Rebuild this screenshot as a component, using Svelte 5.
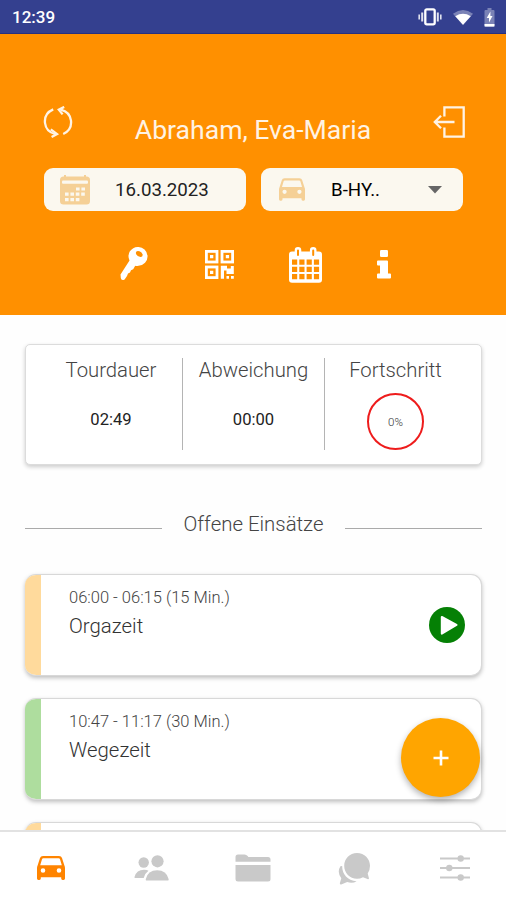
<script>
    let activeTab = $state("tour");

    const driver = "Abraham, Eva-Maria";
    const tabs = ["tour", "clients", "files", "chat", "settings"];

    const jobs = [
        { time: "06:00 - 06:15 (15 Min.)", title: "Orgazeit", kind: "orga", running: true },
        { time: "10:47 - 11:17 (30 Min.)", title: "Wegezeit", kind: "travel", running: false },
        { time: "", title: "", kind: "orga", running: false }
    ];
</script>

{#snippet car()}
    <svg class="car" viewBox="0 0 28 24">
        <path fill="currentColor" fill-rule="evenodd" d="M6 0H22Q24.4 0 25 2L27.4 9.5Q28 10.6 28 12V22.6Q28 24 26.6 24H25.6Q24.2 24 24.2 22.6V21.3H3.8V22.6Q3.8 24 2.4 24H1.4Q0 24 0 22.6V12Q0 10.6.6 9.5L3 2Q3.6 0 6 0ZM6.3 2.2Q5.3 2.2 5 3.2L3.2 9.3H24.8L23 3.2Q22.7 2.2 21.7 2.2ZM6 12.2A2.3 2.3 0 1 0 6 16.8A2.3 2.3 0 1 0 6 12.2ZM22 12.2A2.3 2.3 0 1 0 22 16.8A2.3 2.3 0 1 0 22 12.2Z" />
    </svg>
{/snippet}

<div class="screen">
    <div class="status-bar">
        <span class="clock">12:39</span>
        <div class="status-icons">
            <svg width="24" height="18" viewBox="0 0 24 18" fill="none" stroke="#fff">
                <rect x="7.3" y="1.3" width="9.4" height="15" rx="1.5" stroke-width="2.3" />
                <path d="M4.2 4.5v9M19.8 4.5v9" stroke-width="2" opacity=".85" />
                <path d="M1.2 6.5v5M22.8 6.5v5" stroke-width="1.6" opacity=".85" />
            </svg>
            <svg class="wifi" width="20" height="17" viewBox="0 0 22 17">
                <path d="M0 4.3Q11-3.6 22 4.3L11 17Z" fill="#fff" opacity=".35" />
                <path d="M2.5 7Q11 2 19.5 7L11 16.5Z" fill="#fff" />
            </svg>
            <svg width="11" height="19" viewBox="0 0 11 19">
                <path d="M1.5 2H3.5V0H7.5V2H9.5Q10.5 2 10.5 3V19H.5V3Q.5 2 1.5 2Z" fill="#fff" opacity=".35" />
                <path d="M.5 16H10.5V17.5Q10.5 18.5 9.5 18.5H1.5Q.5 18.5.5 17.5Z" fill="#fff" />
                <path d="M6.4 3.5L2.7 10H5V14.5L8.5 8H6.4Z" fill="#fff" />
            </svg>
        </div>
    </div>

    <header>
        <div class="title-row">
            <svg width="30" height="32" viewBox="0 0 30 32" fill="none" stroke="#fff3e4" stroke-width="2.3">
                <path d="M10.2 3.4C3.6 6.3 1.4 11.5 2 17C2.6 22 6 26.5 12 28" />
                <path d="M7.8 23.4L14 28L8.6 31" />
                <path d="M20.2 28C26.4 25.2 28.6 20 28 14.6C27.4 9.5 24 5.2 17.8 3.6" />
                <path d="M21.2 .9L15.8 3.6L19.6 8.4" />
            </svg>
            <h1>{driver}</h1>
            <svg width="32" height="32" viewBox="0 0 32 32" fill="none" stroke="#fff3e4" stroke-width="2.3">
                <path d="M11.4 10.5V1.3H30.7V30.7H11.4V21.5" />
                <path d="M21.5 16H2M8 9.8L1.8 16L8 22.2" />
            </svg>
        </div>

        <div class="fields">
            <div class="field">
                <svg class="date-icon" width="30" height="30" viewBox="0 0 30 30">
                    <path d="M5 0V4M25 0V4" stroke="#f5d096" stroke-width="2" />
                    <rect x="0" y="1.5" width="30" height="28" rx="3.5" fill="#f5d096" />
                    <rect x="2" y="5.5" width="26" height="3.2" rx="1" fill="#fbf8ef" />
                    <path d="M16 14h9.5M5 19.2h20.5M5 24.6h15" stroke="#fbf8ef" stroke-width="3.2" stroke-dasharray="3.6 1.8" />
                </svg>
                <span>16.03.2023</span>
            </div>
            <div class="field vehicle">
                {@render car()}
                <span>B-HY..</span>
                <svg class="caret" width="14" height="8" viewBox="0 0 14 8">
                    <path d="M0 0H14L7 7.5Z" fill="#666" />
                </svg>
            </div>
        </div>

        <div class="actions">
            <svg width="28" height="34" viewBox="0 0 28 34">
                <path fill="#fff" fill-rule="evenodd" d="M17.8 0A9.3 9.3 0 0 1 18.5 18.8Q16.5 19.3 15.2 18.8L13.2 22.2L11 23.2L10 25.6L8 26.6L7 29L4.6 32.4Q1.3 34 .8 31L.5 27.6L9.5 13.4A9.2 9.2 0 0 1 17.8 0ZM19.4 4.3Q16 3.4 15.8 6Q16.6 9.6 20.5 9.9Q23 10 22.6 7.3Q21.5 4.9 19.4 4.3Z" />
            </svg>
            <svg width="29" height="29" viewBox="0 0 29 29" fill="none" stroke="#fff">
                <g stroke-width="2.8">
                    <rect x="1.4" y="1.4" width="10.6" height="10.6" />
                    <rect x="17" y="1.4" width="10.6" height="10.6" />
                    <rect x="1.4" y="17" width="10.6" height="10.6" />
                </g>
                <path d="M5 5H8.3V8.3H5ZM20.8 5H24.1V8.3H20.8ZM5 20.8H8.3V24.1H5Z" fill="#fff" stroke="none" />
                <path d="M15.8 15.8H22V18.5H25.8V16H28.8V24H21.5V20.5H19V28.8H15.8ZM21.5 26H24V28.8H21.5ZM26 26H28.8V28.8H26Z" fill="#fff" stroke="none" />
            </svg>
            <svg class="calendar" width="33" height="36" viewBox="0 0 33 36">
                <rect x="0" y="4.5" width="33" height="31.2" rx="3" fill="#fff" />
                <path d="M9 3.4V7.5M24.2 3.4V7.5" stroke="#fff" stroke-width="6.6" stroke-linecap="round" />
                <path d="M9 3.4V8M24.2 3.4V8" stroke="#ff9000" stroke-width="2" stroke-linecap="round" />
                <path d="M3 15.2H30.2M3 22.4H30.2M3 29.6H30.2" stroke="#ff9000" stroke-width="5.2" stroke-dasharray="5.2 2.1" />
            </svg>
            <svg width="14" height="29" viewBox="0 0 14 29" fill="#fff">
                <rect x="3" y="0" width="8" height="7" rx="1.3" />
                <path d="M1 10.6H10Q11 10.6 11 11.6V23.6H13Q14 23.6 14 24.6V27.6Q14 28.6 13 28.6H1Q0 28.6 0 27.6V24.6Q0 23.6 1 23.6H3V15.6H1Q0 15.6 0 14.6V11.6Q0 10.6 1 10.6Z" />
            </svg>
        </div>
    </header>

    <main>
        <section class="summary">
            <div class="stat">
                <span class="label">Tourdauer</span>
                <span class="value">02:49</span>
            </div>
            <div class="stat">
                <span class="label">Abweichung</span>
                <span class="value">00:00</span>
            </div>
            <div class="stat">
                <span class="label">Fortschritt</span>
                <div class="progress">0%</div>
            </div>
        </section>

        <div class="divider"><span>Offene Einsätze</span></div>

        <div class="jobs">
            {#each jobs as job}
                <article class="job {job.kind}">
                    <div class="job-text">
                        <span class="time">{job.time}</span>
                        <span class="name">{job.title}</span>
                    </div>
                    {#if job.running}
                        <svg class="play" width="36" height="36" viewBox="0 0 36 36">
                            <circle cx="18" cy="18" r="18" fill="#058005" />
                            <path d="M12.8 10L27.5 18L12.8 26.6Z" fill="#fff" stroke="#fff" stroke-width="2" stroke-linejoin="round" />
                        </svg>
                    {/if}
                </article>
            {/each}
        </div>
    </main>

    <button class="fab" aria-label="Neu">
        <svg width="16" height="16" viewBox="0 0 16 16" stroke="#fff" stroke-width="2.6">
            <path d="M8 .5V15.5M.5 8H15.5" />
        </svg>
    </button>

    <nav>
        {#each tabs as tab}
            <button class:active={activeTab === tab} aria-label={tab} onclick={() => (activeTab = tab)}>
                {#if tab === "tour"}
                    {@render car()}
                {:else if tab === "clients"}
                    <svg width="36" height="26" viewBox="0 0 36 26" fill="currentColor">
                        <circle cx="9.7" cy="7.5" r="5.2" />
                        <circle cx="23.5" cy="6.3" r="6.1" />
                        <path d="M1 23Q.3 23 .5 22Q2.5 14.8 10 14.8Q13 14.8 14.5 15.8Q10.7 18.5 9.7 23Z" />
                        <path d="M12.2 25.4Q11.5 25.4 11.8 24Q13.8 15.2 23.2 15.2Q32.4 15.2 34.6 24Q34.9 25.4 34.2 25.4Z" />
                    </svg>
                {:else if tab === "files"}
                    <svg width="36" height="28" viewBox="0 0 36 28" fill="currentColor">
                        <path d="M.5 7.7V3Q.5.5 3 .5H9.5Q11.5.5 12.6 2L13.4 3H33Q35.5 3 35.5 5.5V7.7Z" />
                        <path d="M.5 11H35.5V25Q35.5 27.5 33 27.5H3Q.5 27.5.5 25Z" />
                    </svg>
                {:else if tab === "chat"}
                    <svg width="33" height="33" viewBox="0 0 33 33" fill="currentColor">
                        <path d="M19 1C26.5 1 32 6.7 32 13.8Q32 18.3 29.7 21.6L31 26.6Q30.5 27.6 29.5 27L25 25.3Q22 26.8 19 26.8C11.7 26.8 6.2 21 6.2 13.8C6.2 6.7 11.7 1 19 1Z" />
                        <path d="M4.2 14C4 21.8 9.4 28.5 18.6 29.2Q14.5 31.8 9.2 30.1L3.2 32.4Q1.6 32.6 1.9 31L3.3 26.3Q-1.3 20.2 2.4 14.2Z" />
                    </svg>
                {:else}
                    <svg width="30" height="26" viewBox="0 0 30 26" fill="currentColor" stroke="currentColor" stroke-width="1.8">
                        <path d="M0 3.5H30M0 13H30M0 22.5H30" />
                        <circle cx="20.7" cy="3.5" r="2.3" />
                        <circle cx="9.3" cy="13" r="2.3" />
                        <circle cx="20.7" cy="22.5" r="2.3" />
                    </svg>
                {/if}
            </button>
        {/each}
    </nav>
</div>

<style>
    :global(body) {
        background: #fff;
    }

    .screen {
        position: relative;
        display: flex;
        flex-direction: column;
        width: 506px;
        height: 900px;
        overflow: hidden;
        background: #fefefe;
        font-family: Roboto, "Liberation Sans", sans-serif;
        color: #222;
    }

    svg {
        display: block;
        flex: none;
    }

    .status-bar {
        display: flex;
        justify-content: space-between;
        align-items: center;
        height: 34px;
        flex: none;
        box-sizing: border-box;
        padding: 1px 11px 0 12px;
        background: #34408f;
        border-bottom: 1px solid #27307f;
        color: #fff;
    }

    .clock {
        font-size: 17px;
        font-weight: 500;
    }

    .status-icons {
        display: flex;
        align-items: center;
        gap: 11px;
    }

    header {
        height: 281px;
        flex: none;
        box-sizing: border-box;
        padding: 72px 43px 0 44px;
        background: #ff9000;
    }

    .title-row {
        display: flex;
        justify-content: space-between;
        height: 62px;
        margin-left: -1px;
        margin-right: -2px;
    }

    h1 {
        margin: 9px 0 0;
        font-size: 26.6px;
        line-height: 30px;
        font-weight: 400;
        color: #fff3e4;
        white-space: nowrap;
    }

    .fields {
        display: grid;
        grid-template-columns: 1fr 1fr;
        gap: 15px;
    }

    .field {
        display: flex;
        align-items: center;
        height: 43px;
        box-sizing: border-box;
        padding: 0 16px;
        border-radius: 9px;
        background: #fbf8ef;
        font-size: 18.7px;
    }

    .field span {
        margin-left: 25px;
        padding-top: 1px;
    }

    .vehicle {
        padding: 0 21px 0 18px;
    }

    .vehicle .car {
        width: 26px;
        height: 23px;
        color: #f5d096;
    }

    .vehicle span {
        margin-left: 26px;
        color: #000;
    }

    .caret {
        margin-left: auto;
    }

    .actions {
        display: flex;
        align-items: center;
        height: 36px;
        margin: 35px 0 0 76px;
    }

    .actions svg:nth-child(2) {
        margin-left: 57px;
    }

    .actions .calendar {
        margin-left: 55px;
        margin-top: 2px;
    }

    .actions svg:nth-child(4) {
        margin-left: 55px;
    }

    main {
        flex: 1;
        min-height: 0;
        padding: 29px 24px 0 25px;
        overflow: hidden;
    }

    .summary {
        display: grid;
        grid-template-columns: 142px 142px 142px;
        height: 121px;
        box-sizing: border-box;
        padding: 13px 14px;
        border: 1px solid #dcdcdc;
        border-radius: 5px;
        background: #fff;
        box-shadow: 0 2px 4px rgba(0, 0, 0, 0.2);
    }

    .stat {
        display: flex;
        flex-direction: column;
        align-items: center;
        height: 92px;
        box-sizing: border-box;
    }

    .stat + .stat {
        border-left: 1px solid #b4b4b4;
    }

    .label {
        font-size: 20.3px;
        line-height: 25px;
        font-weight: 300;
        color: #444;
    }

    .value {
        margin-top: 27px;
        font-size: 16.6px;
        line-height: 20px;
    }

    .progress {
        display: flex;
        align-items: center;
        justify-content: center;
        width: 57px;
        height: 57px;
        margin-top: 10px;
        box-sizing: border-box;
        border: 2.5px solid #ee1c1c;
        border-radius: 50%;
        font-size: 11.5px;
        font-weight: 300;
        color: #333;
    }

    .divider {
        display: flex;
        align-items: center;
        justify-content: space-between;
        height: 30px;
        margin-top: 44px;
        font-size: 20.4px;
        font-weight: 300;
        color: #444;
    }

    .divider::before,
    .divider::after {
        content: "";
        width: 137px;
        height: 1px;
        margin-top: 8px;
        background: #aaa;
    }

    .jobs {
        display: flex;
        flex-direction: column;
        gap: 22px;
        margin-top: 35px;
    }

    .job {
        display: flex;
        align-items: center;
        justify-content: space-between;
        height: 102px;
        flex: none;
        box-sizing: border-box;
        border: 1px solid #d8d8d8;
        border-left: none;
        border-radius: 11px;
        background: #fff;
        box-shadow: 0 2px 4px rgba(0, 0, 0, 0.25);
        padding-right: 16px;
        overflow: hidden;
    }

    .job::before {
        content: "";
        width: 16px;
        height: 102px;
        flex: none;
    }

    .orga::before {
        background: #ffda9c;
    }

    .travel::before {
        background: #aedd9e;
    }

    .job-text {
        display: flex;
        flex-direction: column;
        flex: 1;
        height: 76px;
        padding-left: 28px;
        font-weight: 300;
        color: #333;
    }

    .time {
        font-size: 16.5px;
        line-height: 22px;
        color: #444;
    }

    .name {
        margin-top: 4px;
        font-size: 20.4px;
        line-height: 26px;
    }

    .fab {
        position: absolute;
        left: 401px;
        top: 718px;
        display: flex;
        align-items: center;
        justify-content: center;
        width: 79px;
        height: 79px;
        padding: 0;
        border: none;
        border-radius: 50%;
        background: #ffa500;
        box-shadow: 0 3px 6px rgba(0, 0, 0, 0.3);
    }

    nav {
        display: grid;
        grid-template-columns: repeat(5, 1fr);
        height: 70px;
        flex: none;
        box-sizing: border-box;
        border-top: 2px solid #e2e2e2;
        background: #fff;
    }

    nav button {
        display: flex;
        align-items: center;
        justify-content: center;
        padding: 4px 0 0;
        border: none;
        background: none;
        color: #c9c9c9;
    }

    nav .active {
        color: #ff8400;
    }

    nav .car {
        width: 28px;
        height: 24px;
    }
</style>
